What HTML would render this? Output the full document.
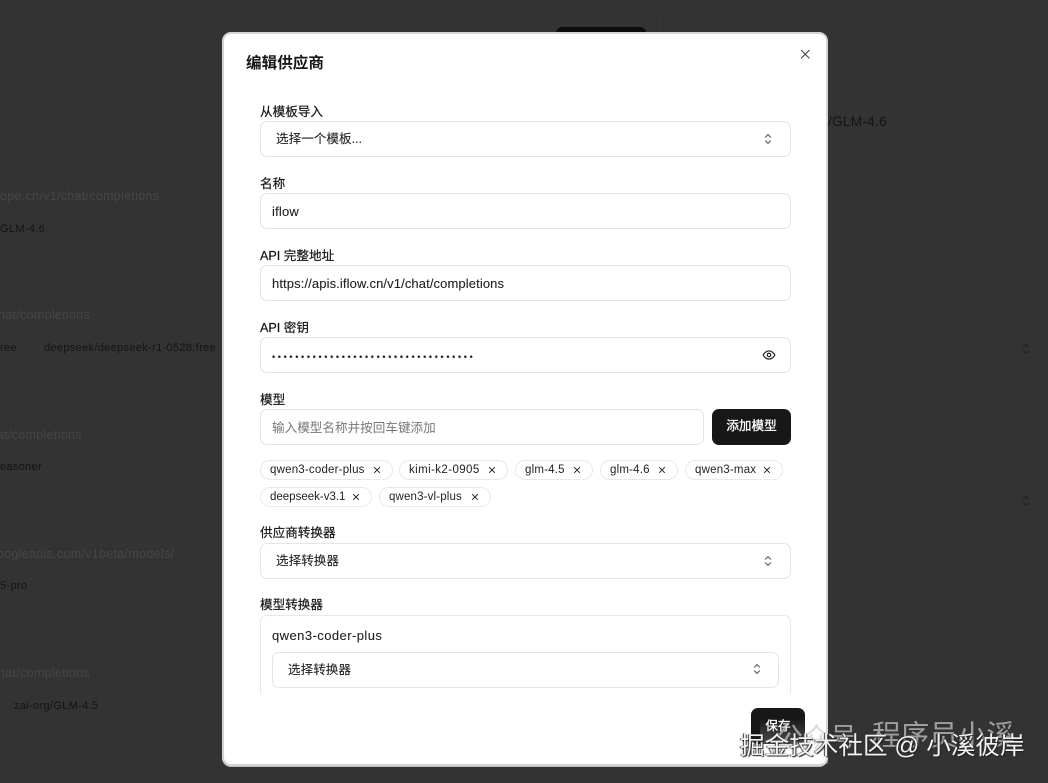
<!DOCTYPE html>
<html lang="zh">
<head>
<meta charset="utf-8">
<title>编辑供应商</title>
<style>
html,body{margin:0;padding:0;width:1048px;height:783px;overflow:hidden;background:#333;}
body{position:relative;font-family:"Liberation Sans","Noto Sans CJK SC",sans-serif;color:#171717;}
.a{position:absolute;white-space:nowrap;}
.bg{font-size:12.5px;color:#464646;letter-spacing:.3px;line-height:16px;}
.bgd{font-size:11px;color:#141414;letter-spacing:.33px;line-height:14px;}
#m{position:absolute;left:222px;top:32px;width:602px;height:730px;background:#fff;border:2px solid #d4d4d4;border-radius:9px;box-shadow:0 1px 0 #bbb;overflow:hidden;}
.l{position:absolute;left:260px;font-size:12.6px;line-height:16px;color:#171717;white-space:nowrap;-webkit-text-stroke:.2px #171717;}
.f{position:absolute;left:260px;width:529px;height:34px;border:1px solid #e5e5e5;border-radius:7px;background:#fff;}
.t{position:absolute;font-size:12.6px;line-height:16px;white-space:nowrap;color:#222;-webkit-text-stroke:.1px #222;}
.p{position:absolute;height:18px;border:1px solid #e8e8e8;border-radius:10px;background:#fff;font-size:11.5px;line-height:18px;color:#222;white-space:nowrap;padding-left:9px;box-sizing:content-box;letter-spacing:.2px;}
.p svg{position:absolute;top:5px;width:8px;height:8px;}
.b{position:absolute;background:#171717;color:#fff;border-radius:7px;font-size:12.6px;text-align:center;white-space:nowrap;-webkit-text-stroke:.3px #fff;}
</style>
</head>
<body>
<div class="a bg" style="left:0;top:188px">ope.cn/v1/chat/completions</div>
<div class="a bgd" style="left:0;top:222px">GLM-4.6</div>
<div class="a bg" style="left:-2px;top:307px">hat/completions</div>
<div class="a bgd" style="left:0;top:341px">ree</div>
<div class="a bgd" style="left:44px;top:341px">deepseek/deepseek-r1-0528:free</div>
<div class="a bg" style="left:-3px;top:427px">at/completions</div>
<div class="a bgd" style="left:0;top:460px">easoner</div>
<div class="a bg" style="left:-3px;top:546px">oogleapis.com/v1beta/models/</div>
<div class="a bgd" style="left:0;top:579px">5-pro</div>
<div class="a bg" style="left:-2px;top:665px">hat/completions</div>
<div class="a bgd" style="left:14px;top:699px">zai-org/GLM-4.5</div>
<div class="a bgd" style="left:828px;top:114px;font-size:13.5px;line-height:16px">/GLM-4.6</div>
<svg class="a" style="left:1019px;top:342px" width="14" height="14" viewBox="0 0 14 14" fill="none" stroke="#222" stroke-width="1.2"><path d="M4.2 5.4 7 2.6l2.8 2.8M4.2 8.6 7 11.4l2.8-2.8"/></svg>
<svg class="a" style="left:1019px;top:494px" width="14" height="14" viewBox="0 0 14 14" fill="none" stroke="#222" stroke-width="1.2"><path d="M4.2 5.4 7 2.6l2.8 2.8M4.2 8.6 7 11.4l2.8-2.8"/></svg>
<div class="a" style="left:556px;top:27px;width:90px;height:8px;background:#0d0d0d;border-radius:6px 6px 0 0"></div>
<div class="a" style="left:660px;top:20px;width:1px;height:12px;background:#3a3a3a"></div>

<div id="m"></div>

<div class="a" style="left:246px;top:54px;font-size:15.6px;line-height:20px;font-weight:700;color:#171717">编辑供应商</div>
<svg class="a" style="left:798px;top:47px" width="14" height="14" viewBox="0 0 14 14" fill="none" stroke="#444" stroke-width="1.1"><path d="M3 3l8.4 8.4M11.4 3 3 11.4"/></svg>

<div class="l" style="top:104px">从模板导入</div>
<div class="f" style="top:121px"></div>
<div class="t" style="left:276px;top:131px">选择一个模板...</div>
<svg class="a" style="left:761px;top:132px" width="14" height="14" viewBox="0 0 14 14" fill="none" stroke="#666" stroke-width="1.2"><path d="M4.2 5.4 7 2.6l2.8 2.8M4.2 8.6 7 11.4l2.8-2.8"/></svg>

<div class="l" style="top:176px">名称</div>
<div class="f" style="top:193px"></div>
<div class="t" style="left:272px;top:204px;font-size:13px;letter-spacing:.2px">iflow</div>

<div class="l" style="top:248px">API 完整地址</div>
<div class="f" style="top:265px"></div>
<div class="t" style="left:272px;top:276px;font-size:13px;letter-spacing:.11px">https://apis.iflow.cn/v1/chat/completions</div>

<div class="l" style="top:320px">API 密钥</div>
<div class="f" style="top:337px"></div>
<div class="t" style="left:272px;top:349px;font-size:9px;letter-spacing:2.66px;color:#222">•••••••••••••••••••••••••••••••••••</div>
<svg class="a" style="left:762px;top:348px" width="14" height="14" viewBox="0 0 24 24" fill="none" stroke="#222" stroke-width="2" stroke-linecap="round" stroke-linejoin="round"><path d="M2 12s3.6-7 10-7 10 7 10 7-3.6 7-10 7-10-7-10-7Z"/><circle cx="12" cy="12" r="3"/></svg>

<div class="l" style="top:392px">模型</div>
<div class="f" style="top:409px;width:442px"></div>
<div class="t" style="left:272px;top:420px;color:#777;-webkit-text-stroke:0">输入模型名称并按回车键添加</div>
<div class="b" style="left:712px;top:409px;width:79px;height:36px;line-height:35px">添加模型</div>

<div class="p" style="left:260px;top:460px;width:122px">qwen3-coder-plus<svg style="left:112px" viewBox="0 0 8 8" fill="none" stroke="#222" stroke-width="1"><path d="M1.2 1.2l5.6 5.6M6.8 1.2 1.2 6.8"/></svg></div>
<div class="p" style="left:399px;top:460px;width:98px;letter-spacing:.4px">kimi-k2-0905<svg style="left:88px" viewBox="0 0 8 8" fill="none" stroke="#222" stroke-width="1"><path d="M1.2 1.2l5.6 5.6M6.8 1.2 1.2 6.8"/></svg></div>
<div class="p" style="left:515px;top:460px;width:67px">glm-4.5<svg style="left:57px" viewBox="0 0 8 8" fill="none" stroke="#222" stroke-width="1"><path d="M1.2 1.2l5.6 5.6M6.8 1.2 1.2 6.8"/></svg></div>
<div class="p" style="left:600px;top:460px;width:67px">glm-4.6<svg style="left:57px" viewBox="0 0 8 8" fill="none" stroke="#222" stroke-width="1"><path d="M1.2 1.2l5.6 5.6M6.8 1.2 1.2 6.8"/></svg></div>
<div class="p" style="left:685px;top:460px;width:87px">qwen3-max<svg style="left:77px" viewBox="0 0 8 8" fill="none" stroke="#222" stroke-width="1"><path d="M1.2 1.2l5.6 5.6M6.8 1.2 1.2 6.8"/></svg></div>
<div class="p" style="left:260px;top:487px;width:101px;letter-spacing:0">deepseek-v3.1<svg style="left:91px" viewBox="0 0 8 8" fill="none" stroke="#222" stroke-width="1"><path d="M1.2 1.2l5.6 5.6M6.8 1.2 1.2 6.8"/></svg></div>
<div class="p" style="left:379px;top:487px;width:101px;letter-spacing:.15px">qwen3-vl-plus<svg style="left:91px" viewBox="0 0 8 8" fill="none" stroke="#222" stroke-width="1"><path d="M1.2 1.2l5.6 5.6M6.8 1.2 1.2 6.8"/></svg></div>

<div class="l" style="top:525px">供应商转换器</div>
<div class="f" style="top:543px"></div>
<div class="t" style="left:276px;top:553px">选择转换器</div>
<svg class="a" style="left:761px;top:554px" width="14" height="14" viewBox="0 0 14 14" fill="none" stroke="#666" stroke-width="1.2"><path d="M4.2 5.4 7 2.6l2.8 2.8M4.2 8.6 7 11.4l2.8-2.8"/></svg>

<div class="l" style="top:597px">模型转换器</div>
<div class="a" style="left:260px;top:615px;width:529px;height:78px;border:1px solid #e8e8e8;border-bottom:0;border-radius:7px 7px 0 0;background:#fff"></div>
<div class="t" style="left:272px;top:628px;font-size:13px;letter-spacing:.44px">qwen3-coder-plus</div>
<div class="f" style="left:272px;top:652px;width:505px"></div>
<div class="t" style="left:288px;top:662px">选择转换器</div>
<svg class="a" style="left:750px;top:662px" width="14" height="14" viewBox="0 0 14 14" fill="none" stroke="#666" stroke-width="1.2"><path d="M4.2 5.4 7 2.6l2.8 2.8M4.2 8.6 7 11.4l2.8-2.8"/></svg>

<div class="b" style="left:751px;top:708px;width:54px;height:36px;line-height:36px">保存</div>

<svg class="a" style="left:702px;top:722px" width="40" height="32" viewBox="0 0 40 32" fill="#fff" fill-opacity=".75"><ellipse cx="14" cy="12" rx="11" ry="9.5"/><ellipse cx="26" cy="21" rx="9" ry="7.5"/></svg>
<div class="a" style="left:760px;top:718px;width:68px;height:46px;background:linear-gradient(180deg,rgba(255,255,255,0),rgba(255,255,255,.25) 60%)"></div>
<div class="a" style="left:776px;top:722px;font-size:27px;line-height:32px;color:#ccc;opacity:.7">公众号</div>
<div class="a" style="left:872px;top:720px;font-size:28.6px;line-height:32px;color:#ccc;opacity:.7">程序员小溪</div>
<div class="a" style="left:740px;top:732px;font-size:24.6px;line-height:30px;color:#f2f2f2;text-shadow:1px 1px 1px #222,-1px 0 1px #333">掘金技术社区 @ 小溪彼岸</div>
</body>
</html>
